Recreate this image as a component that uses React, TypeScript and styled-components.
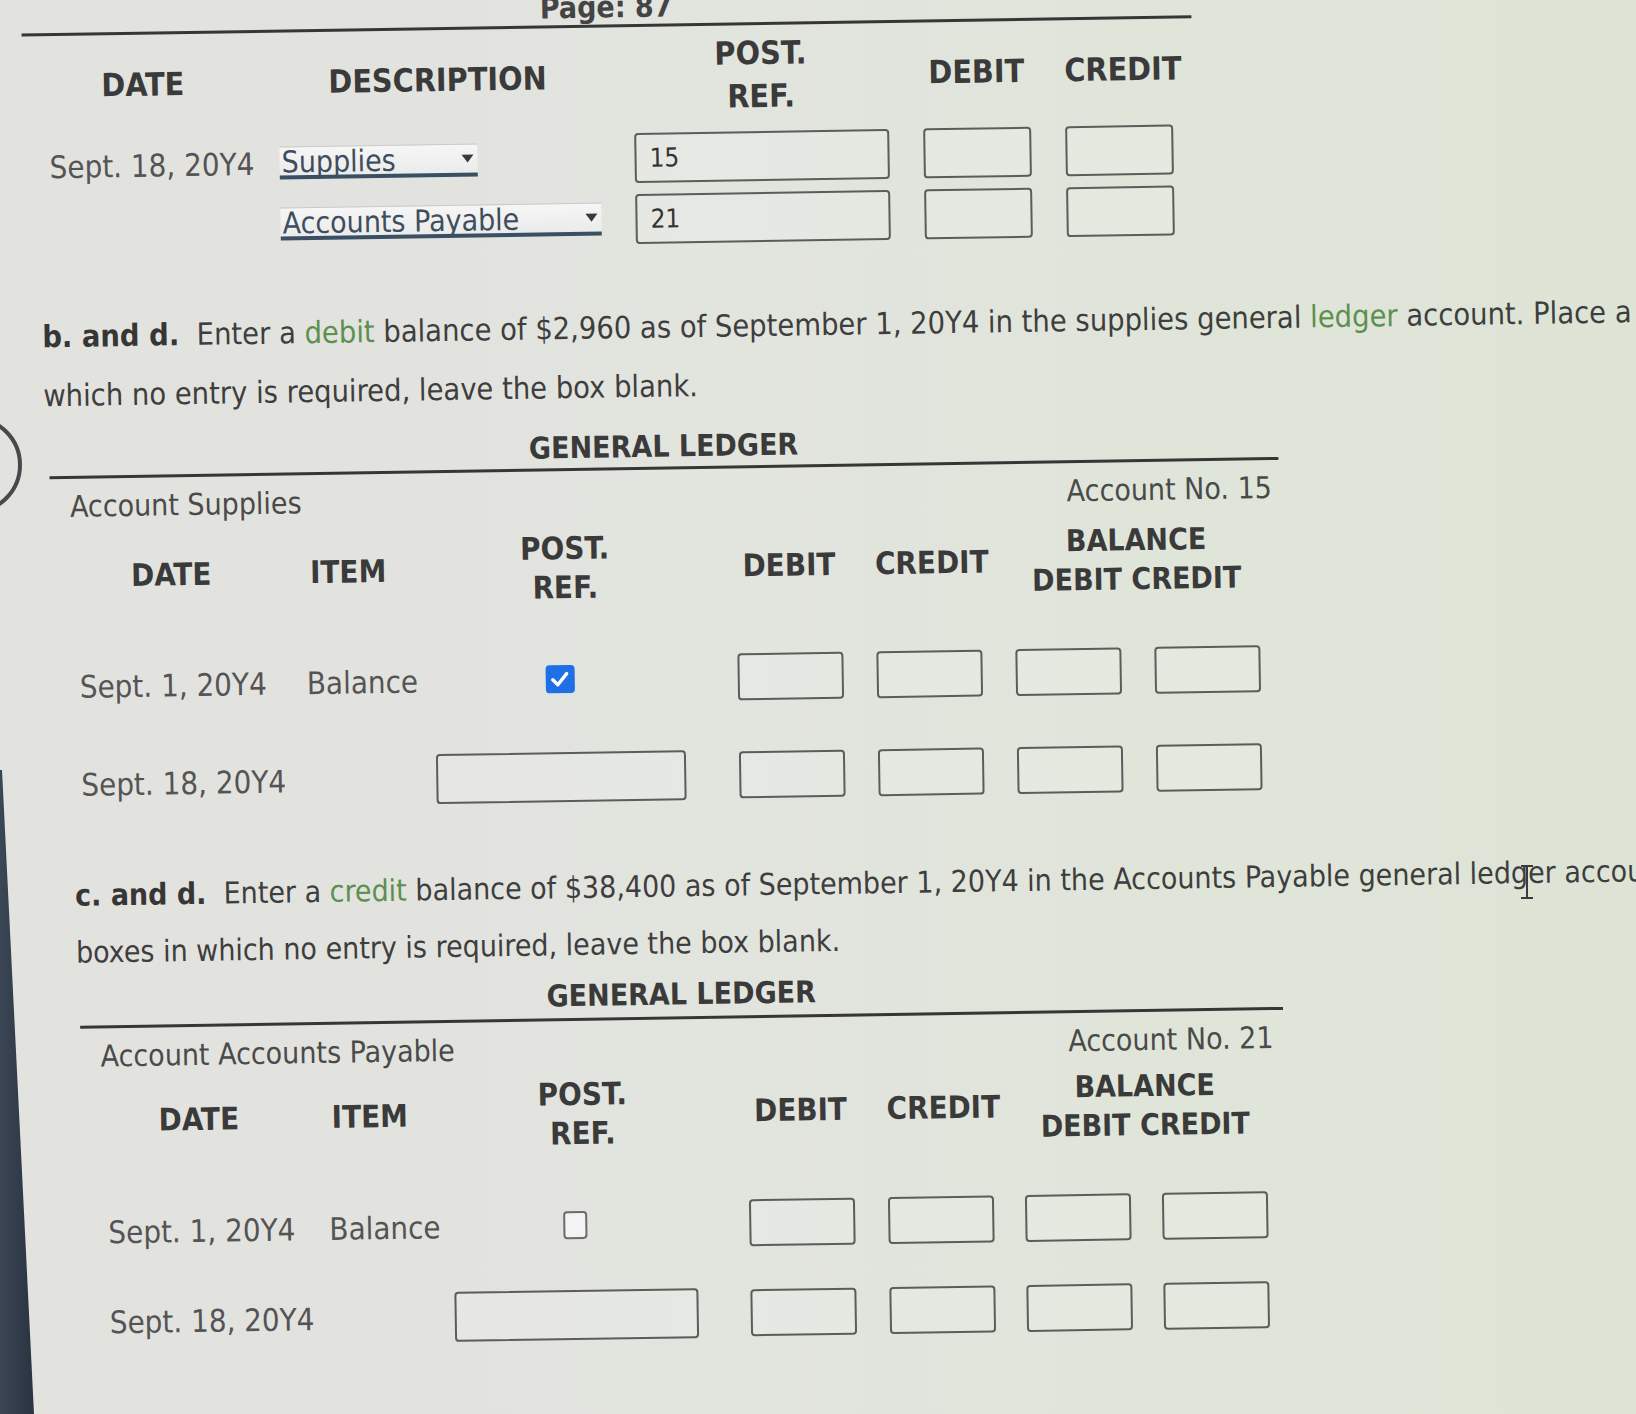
import React from 'react';
import styled, { createGlobalStyle } from 'styled-components';

const GlobalStyle = createGlobalStyle`
  html, body {
    margin: 0;
    padding: 0;
  }
  body {
    font-family: "DejaVu Sans Condensed", "DejaVu Sans", Verdana, sans-serif;
    color: #3d3d3d;
    background: #e3e4e0;
  }
`;

const Screen = styled.div`
  position: relative;
  width: 1636px;
  height: 1414px;
  overflow: hidden;
  background: linear-gradient(90deg, #e2e2df 0%, #e2e4de 45%, #dfe5d8 80%, #dde4d6 100%);
`;

// the photo was taken at a slight angle, the whole sheet is tilted a little
const Sheet = styled.div`
  width: 1636px;
  display: flex;
  flex-direction: column;
  align-items: flex-start;
  transform: rotate(-0.9deg);
  transform-origin: 0 700px;
`;

const Journal = styled.section`
  margin-left: 32px;
  width: 1170px;
`;

const PageLabel = styled.div`
  height: 34px;
  line-height: 34px;
  font-size: 30px;
  font-weight: bold;
  color: #444;
  text-align: center;
`;

const Rule = styled.div<{ $gap?: number }>`
  margin-top: ${(p) => p.$gap ?? 0}px;
  border-top: 3px solid #363636;
`;

const Grid = styled.div<{ $cols: string; $height: number; $padBottom?: number }>`
  display: grid;
  grid-template-columns: ${(p) => p.$cols};
  align-items: center;
  height: ${(p) => p.$height}px;
  padding-bottom: ${(p) => p.$padBottom ?? 0}px;
  box-sizing: border-box;
`;

const Label = styled.div<{
  $pad?: number;
  $width?: number;
  $span?: number;
  $lh?: number;
  $size?: number;
  $shift?: number;
}>`
  grid-column: span ${(p) => p.$span ?? 1};
  margin-left: ${(p) => p.$shift ?? 0}px;
  padding-left: ${(p) => p.$pad ?? 0}px;
  width: ${(p) => (p.$width ? `${p.$width}px` : 'auto')};
  text-align: ${(p) => (p.$width ? 'center' : 'left')};
  font-size: ${(p) => p.$size ?? 31}px;
  font-weight: bold;
  line-height: ${(p) => p.$lh ?? 39}px;
  color: #3a3a3a;
  white-space: nowrap;
`;

const CellText = styled.div<{ $pad?: number }>`
  padding-left: ${(p) => p.$pad ?? 0}px;
  font-size: 31px;
  line-height: 38px;
  color: #545454;
  white-space: nowrap;
`;

const Select = styled.div<{ $width: number }>`
  position: relative;
  width: ${(p) => p.$width}px;
  height: 33px;
  box-sizing: border-box;
  padding-left: 2px;
  background: linear-gradient(#f5f6f5, #eaeceb);
  border-top: 1px solid #c9cccc;
  border-bottom: 4px solid #3a4e64;
  font-size: 30px;
  line-height: 30px;
  color: #3f4d5c;
  white-space: nowrap;
`;

const Caret = styled.span`
  position: absolute;
  right: 4px;
  top: 10px;
  width: 0;
  height: 0;
  border-left: 6px solid transparent;
  border-right: 6px solid transparent;
  border-top: 8px solid #3a3a3a;
`;

const Field = styled.input<{ $w: number; $h?: number }>`
  width: ${(p) => p.$w}px;
  height: ${(p) => p.$h ?? 50}px;
  box-sizing: border-box;
  margin: 0;
  padding: 0 0 0 13px;
  border: 2px solid #5b5d5b;
  border-radius: 4px;
  background: rgba(255, 255, 255, 0.16);
  font-family: inherit;
  font-size: 26px;
  color: #333;
  outline: none;
`;

const CheckCell = styled.div<{ $width: number }>`
  width: ${(p) => p.$width}px;
  display: flex;
  justify-content: center;
`;

const Check = styled.span<{ $on: boolean }>`
  display: flex;
  align-items: center;
  justify-content: center;
  width: ${(p) => (p.$on ? 29 : 24)}px;
  height: 28px;
  box-sizing: border-box;
  border-radius: 4px;
  background: ${(p) => (p.$on ? '#1f6fe6' : '#f2f3f2')};
  border: ${(p) => (p.$on ? 'none' : '2px solid #6a6c6a')};
`;

const Instructions = styled.div<{ $indent: number; $lh: number; $gap: number; $size: number }>`
  margin-top: ${(p) => p.$gap}px;
  margin-left: ${(p) => p.$indent}px;
  font-size: ${(p) => p.$size}px;
  line-height: ${(p) => p.$lh}px;
  color: #3e3e3e;
  white-space: nowrap;
`;

const Lead = styled.b`
  color: #363636;
`;

const Hint = styled.span`
  color: #5d8f4f;
`;

const Ledger = styled.section<{ $indent: number; $width: number; $gap: number }>`
  margin-top: ${(p) => p.$gap}px;
  margin-left: ${(p) => p.$indent}px;
  width: ${(p) => p.$width}px;
`;

const LedgerTitle = styled.div`
  height: 40px;
  line-height: 40px;
  font-size: 30px;
  font-weight: bold;
  color: #3a3a3a;
  text-align: center;
`;

const AccountRow = styled.div<{ $right: number }>`
  display: flex;
  justify-content: space-between;
  padding: 10px ${(p) => p.$right}px 0 20px;
  height: 46px;
  box-sizing: border-box;
  font-size: 30px;
  line-height: 36px;
  color: #4a4a4a;
`;

const Bezel = styled.div`
  position: absolute;
  left: 0;
  top: 0;
  width: 40px;
  height: 1414px;
  background: linear-gradient(90deg, #3b4656, #27303c);
  clip-path: polygon(0 770px, 2px 770px, 34px 1414px, 0 1414px);
`;

const Ring = styled.div`
  position: absolute;
  left: -76px;
  top: 416px;
  width: 98px;
  height: 98px;
  box-sizing: border-box;
  border: 4px solid #474a4a;
  border-radius: 50%;
`;

const Cursor = styled.svg`
  position: absolute;
  left: 1519px;
  top: 864px;
`;

const CheckMark = () => (
  <svg width="20" height="18" viewBox="0 0 20 18">
    <path d="M3 9.5 L8 14.5 L17 3.5" fill="none" stroke="#fff" strokeWidth="3.4" strokeLinecap="round" strokeLinejoin="round" />
  </svg>
);

type LedgerProps = {
  indent: number;
  width: number;
  gap: number;
  cols: string;
  rowHeight: number;
  headPad: number;
  datePad: number;
  dateHeadPad: number;
  itemPad: number;
  itemHeadPad: number;
  refWidth: number;
  refShift: number;
  box: number;
  balanceWidth: number;
  rightPad: number;
  account: string;
  number: string;
  checked: boolean;
};

const LedgerTable = (p: LedgerProps) => {
  const boxes = [0, 1, 2, 3].map((i) => <Field key={i} $w={p.box} $h={47} readOnly />);
  return (
    <Ledger $indent={p.indent} $width={p.width} $gap={p.gap}>
      <LedgerTitle>GENERAL LEDGER</LedgerTitle>
      <Rule $gap={p.checked ? 0 : 2} />
      <AccountRow $right={p.rightPad}>
        <span>Account {p.account}</span>
        <span>Account No. {p.number}</span>
      </AccountRow>
      <Grid $cols={p.cols} $height={113} $padBottom={p.headPad}>
        <Label $pad={p.dateHeadPad}>DATE</Label>
        <Label $pad={p.itemHeadPad}>ITEM</Label>
        <Label $width={p.refWidth} $shift={p.refShift}>
          POST.
          <br />
          REF.
        </Label>
        <Label $width={p.box}>DEBIT</Label>
        <Label $width={p.box}>CREDIT</Label>
        <Label $span={2} $width={p.balanceWidth} $size={30}>
          BALANCE
          <br />
          DEBIT CREDIT
        </Label>
      </Grid>
      <Grid $cols={p.cols} $height={p.rowHeight}>
        <CellText $pad={p.datePad}>Sept. 1, 20Y4</CellText>
        <CellText $pad={p.itemPad}>Balance</CellText>
        <CheckCell $width={p.refWidth}>
          <Check $on={p.checked}>{p.checked && <CheckMark />}</Check>
        </CheckCell>
        {boxes}
      </Grid>
      <Grid $cols={p.cols} $height={p.rowHeight}>
        <CellText $pad={p.datePad}>Sept. 18, 20Y4</CellText>
        <div />
        <Field $w={p.refWidth} readOnly />
        {boxes}
      </Grid>
    </Ledger>
  );
};

const journalCols = '256px 355px 289px 142px 128px';

export default function App() {
  return (
    <>
      <GlobalStyle />
      <Screen>
        <Sheet>
          <Journal>
            <PageLabel>Page: 87</PageLabel>
            <Rule />
            <Grid $cols={journalCols} $height={100}>
              <Label $pad={79} $size={32}>DATE</Label>
              <Label $pad={50} $size={32}>DESCRIPTION</Label>
              <Label $width={255} $lh={43} $size={32}>
                POST.
                <br />
                REF.
              </Label>
              <Label $width={108} $size={32}>DEBIT</Label>
              <Label $width={108} $size={32}>CREDIT</Label>
            </Grid>
            <Grid $cols={journalCols} $height={61}>
              <CellText $pad={26}>Sept. 18, 20Y4</CellText>
              <Select $width={198}>
                Supplies
                <Caret />
              </Select>
              <Field $w={255} defaultValue="15" readOnly />
              <Field $w={108} readOnly />
              <Field $w={108} readOnly />
            </Grid>
            <Grid $cols={journalCols} $height={61}>
              <div />
              <Select $width={321}>
                Accounts Payable
                <Caret />
              </Select>
              <Field $w={255} defaultValue="21" readOnly />
              <Field $w={108} readOnly />
              <Field $w={108} readOnly />
            </Grid>
          </Journal>

          <Instructions $indent={48} $lh={59} $gap={49} $size={30.5}>
            <Lead>b. and d.</Lead>&nbsp; Enter a <Hint>debit</Hint> balance of $2,960 as of September 1, 20Y4 in the
            supplies general <Hint>ledger</Hint> account. Place a check
            <br />
            which no entry is required, leave the box blank.
          </Instructions>

          <LedgerTable
            indent={53}
            width={1229}
            gap={11}
            cols="247px 135px 303px 139px 139px 139px 127px"
            rowHeight={98}
            headPad={11}
            datePad={27}
            dateHeadPad={80}
            itemPad={7}
            itemHeadPad={12}
            refWidth={250}
            refShift={7}
            box={106}
            balanceWidth={245}
            rightPad={7}
            account="Supplies"
            number="15"
            checked
          />

          <Instructions $indent={72} $lh={57} $gap={33} $size={30}>
            <Lead>c. and d.</Lead>&nbsp; Enter a <Hint>credit</Hint> balance of $38,400 as of September 1, 20Y4 in the
            Accounts Payable general ledger account.
            <br />
            boxes in which no entry is required, leave the box blank.
          </Instructions>

          <LedgerTable
            indent={75}
            width={1203}
            gap={3}
            cols="241px 129px 296px 139px 137px 137px 124px"
            rowHeight={90}
            headPad={20}
            datePad={25}
            dateHeadPad={77}
            itemPad={5}
            itemHeadPad={9}
            refWidth={244}
            refShift={9}
            box={106}
            balanceWidth={243}
            rightPad={10}
            account="Accounts Payable"
            number="21"
            checked={false}
          />
        </Sheet>

        <Ring />
        <Cursor width="16" height="36" viewBox="0 0 16 36">
          <path d="M2 2 H14 M8 2 V34 M2 34 H14" stroke="#3a3a3a" strokeWidth="2" fill="none" />
        </Cursor>
        <Bezel />
      </Screen>
    </>
  );
}
